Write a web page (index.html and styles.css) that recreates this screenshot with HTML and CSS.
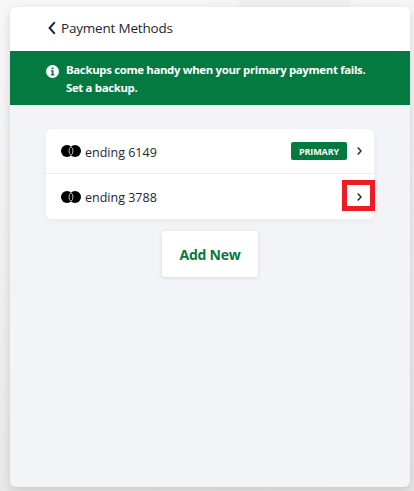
FILE: index.html
```html
<!DOCTYPE html>
<html lang="en">
<head>
<meta charset="utf-8">
<title>Payment Methods</title>
<link rel="stylesheet" href="styles.css">
</head>
<body>
<div class="panel">
  <header class="header">
    <svg class="back" width="8" height="14" viewBox="0 0 8 14"><path d="M6.8 1.2 1.6 7l5.2 5.8" fill="none" stroke="#1f2533" stroke-width="2"/></svg>
    <span>Payment Methods</span>
  </header>
  <div class="banner">
    <svg class="info" width="13" height="13" viewBox="0 0 13 13"><circle cx="6.5" cy="6.5" r="6.5" fill="#fff"/><path d="M4.9 5.3h2.6v4h.9v1.1H4.7V9.3h1V6.4h-.8z" fill="#047a40"/><rect x="5.6" y="2.5" width="1.9" height="1.9" fill="#047a40"/></svg>
    <p class="banner-text">Backups come handy when your primary payment fails.<br>Set a backup.</p>
  </div>
  <main class="content">
    <div class="list">
      <div class="row">
        <svg class="card" width="20" height="12" viewBox="0 0 20 12"><circle cx="6" cy="6" r="6" fill="#000"/><circle cx="14" cy="6" r="6" fill="#000"/><path d="M10 1.53A6 6 0 0 0 10 10.47A6 6 0 0 0 10 1.53Z" fill="#000" stroke="#b4c3cc" stroke-width="1"/></svg>
        <span class="label">ending 6149</span>
        <span class="badge">PRIMARY</span>
        <svg class="chev" width="5" height="8" viewBox="0 0 5 8"><path d="M.7.6 4 4 .7 7.4" fill="none" stroke="#1f2533" stroke-width="1.4"/></svg>
      </div>
      <div class="row">
        <svg class="card" width="20" height="12" viewBox="0 0 20 12"><circle cx="6" cy="6" r="6" fill="#000"/><circle cx="14" cy="6" r="6" fill="#000"/><path d="M10 1.53A6 6 0 0 0 10 10.47A6 6 0 0 0 10 1.53Z" fill="#000" stroke="#b4c3cc" stroke-width="1"/></svg>
        <span class="label">ending 3788</span>
        <svg class="chev" width="5" height="8" viewBox="0 0 5 8"><path d="M.7.6 4 4 .7 7.4" fill="none" stroke="#1f2533" stroke-width="1.4"/></svg>
        <span class="highlight"></span>
      </div>
    </div>
    <button class="add" type="button">Add New</button>
  </main>
</div>
</body>
</html>
```
FILE: styles.css
```css
* { box-sizing: border-box; }
html, body { height: 100%; }
body {
  margin: 0;
  padding: 7px 4px 4px 10px;
  background:
    radial-gradient(ellipse 62px 60px at 295px -22px, #eeeeef 98%, transparent 100%),
    linear-gradient(170deg, #f7f7f9 0%, #f0f0f1 45%, #e6e6e7 100%);
  font-family: "Open Sans", "Noto Sans", sans-serif;
  color: #1f2533;
  overflow: hidden;
}
.panel {
  height: 480px;
  width: 400px;
  display: flex;
  flex-direction: column;
  border-radius: 6px;
  overflow: hidden;
  background: #f3f4f8;
  box-shadow: 0 3px 10px rgba(0,0,0,.14);
}
.header {
  height: 44px;
  flex: none;
  display: flex;
  align-items: center;
  gap: 5px;
  padding: 0 0 2px 38px;
  background: #fff;
  font-size: 13.5px;
  letter-spacing: -.2px;
}
.banner {
  height: 54px;
  flex: none;
  display: flex;
  align-items: flex-start;
  gap: 7px;
  padding: 10px 0 0 36px;
  background: #047a40;
  color: #fff;
}
.info { flex: none; margin-top: 4px; }
.banner-text { margin: 0; font-size: 11.4px; font-weight: 700; line-height: 18px; letter-spacing: -.33px; }
.content {
  flex: 1;
  padding: 24px 36px 0;
  display: flex;
  flex-direction: column;
  align-items: center;
}
.list {
  width: 328px;
  background: #fff;
  border-radius: 6px;
  box-shadow: 0 2px 8px rgba(0,0,0,.05);
}
.row {
  position: relative;
  height: 44px;
  display: flex;
  align-items: center;
  padding: 0 12px 0 15px;
  font-size: 12.5px;
}
.row + .row { height: 46px; border-top: 1px solid #ebebef; }
.card { flex: none; margin-right: 4px; }
.label { flex: 1; padding-top: 2px; }
.badge {
  width: 56px;
  height: 18px;
  margin-right: 10px;
  display: flex;
  align-items: center;
  justify-content: center;
  border-radius: 2px;
  background: #047a40;
  color: #fff;
  font-size: 9px;
  font-weight: 700;
  letter-spacing: -.1px;
}
.chev { flex: none; }
.highlight {
  position: absolute;
  left: 296px;
  top: 6px;
  width: 33px;
  height: 31px;
  border: 5px solid #ed1c24;
}
.add {
  width: 96px;
  height: 46px;
  margin-top: 12px;
  border: 0;
  border-radius: 3px;
  background: #fff;
  box-shadow: 0 1px 4px rgba(0,0,0,.12);
  color: #047a40;
  font-family: inherit;
  font-size: 14px;
  font-weight: 700;
  letter-spacing: -.25px;
}
```
